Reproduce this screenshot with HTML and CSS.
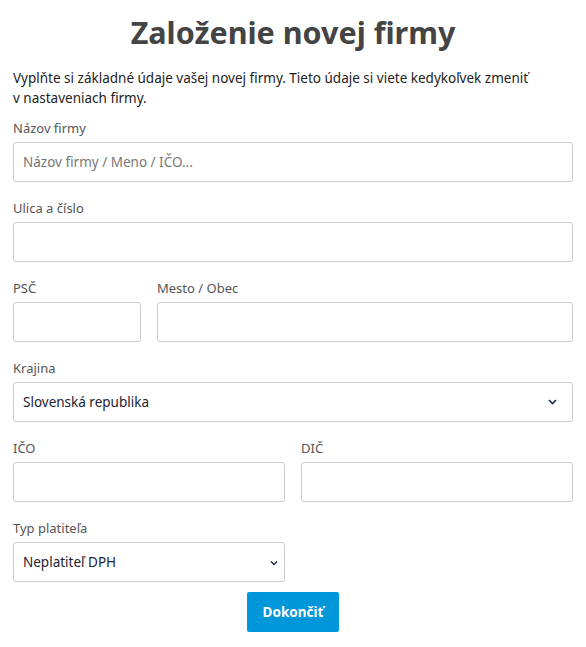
FILE: index.html
```html
<!DOCTYPE html>
<html lang="sk">
<head>
<meta charset="utf-8">
<title>Založenie novej firmy</title>
<link rel="stylesheet" href="styles.css">
</head>
<body>
<main class="page">
  <h1 class="title">Založenie novej firmy</h1>
  <p class="intro">Vyplňte si základné údaje vašej novej firmy. Tieto údaje si viete kedykoľvek zmeniť<br>v nastaveniach firmy.</p>

  <div class="field">
    <label class="label">Názov firmy</label>
    <input class="input" type="text" placeholder="Názov firmy / Meno / IČO...">
  </div>

  <div class="field">
    <label class="label">Ulica a číslo</label>
    <input class="input" type="text">
  </div>

  <div class="row row-zip">
    <div class="field">
      <label class="label">PSČ</label>
      <input class="input" type="text">
    </div>
    <div class="field">
      <label class="label">Mesto / Obec</label>
      <input class="input" type="text">
    </div>
  </div>

  <div class="field">
    <label class="label">Krajina</label>
    <div class="select">
      <span class="select-value">Slovenská republika</span>
      <svg class="chevron" width="9" height="6" viewBox="0 0 9 6"><path d="M1 1 L4.5 4.5 L8 1" fill="none" stroke="#1f2a44" stroke-width="1.6"/></svg>
    </div>
  </div>

  <div class="row row-half">
    <div class="field">
      <label class="label">IČO</label>
      <input class="input" type="text">
    </div>
    <div class="field">
      <label class="label">DIČ</label>
      <input class="input" type="text">
    </div>
  </div>

  <div class="row row-half">
    <div class="field">
      <label class="label">Typ platiteľa</label>
      <div class="select">
        <span class="select-value">Neplatiteľ DPH</span>
        <svg class="chevron chevron-native" width="8" height="6" viewBox="0 0 8 6"><path d="M1 1.5 L4 4.5 L7 1.5" fill="none" stroke="#1f2a44" stroke-width="1.4"/></svg>
      </div>
    </div>
  </div>

  <div class="actions">
    <button class="btn" type="button">Dokončiť</button>
  </div>
</main>
</body>
</html>
```

FILE: styles.css
```css
* { box-sizing: border-box; }

body {
  margin: 0;
  background: #ffffff;
  font-family: "Noto Sans", "Open Sans", sans-serif;
  color: #222;
}

.page {
  width: 586px;
  padding: 0 13px;
}

.title {
  margin: 12px 0 0;
  font-size: 30.5px;
  line-height: 40px;
  font-weight: 700;
  color: #444;
  text-align: center;
}

.intro {
  margin: 16px 0 0;
  font-size: 13.5px;
  line-height: 20px;
  color: #222;
}

.field {
  display: flex;
  flex-direction: column;
  margin-top: 16px;
}

.intro + .field { margin-top: 10px; }

.row .field { margin-top: 0; }

.row {
  display: grid;
  gap: 16px;
  margin-top: 16px;
}

.row-zip { grid-template-columns: 128px 1fr; }
.row-half { grid-template-columns: 1fr 1fr; }

.label {
  font-size: 13px;
  line-height: 20px;
  color: #555;
  margin-bottom: 4px;
}

.input,
.select {
  height: 40px;
  width: 100%;
  border: 1px solid #ccc;
  border-radius: 3px;
  padding: 0 9px;
  font-family: inherit;
  font-size: 13.5px;
  color: #222;
  background: #fff;
}

.input::placeholder { color: #777; }

.select {
  position: relative;
  display: flex;
  align-items: center;
  color: #1c2233;
}

.chevron {
  position: absolute;
  right: 15px;
  top: 16px;
}

.chevron-native {
  right: 6px;
  top: 17px;
}

.actions {
  display: flex;
  justify-content: center;
  margin-top: 10px;
}

.btn {
  width: 92px;
  height: 40px;
  border: 0;
  border-radius: 2px;
  background: #0096da;
  color: #fff;
  font-family: inherit;
  font-weight: 700;
  font-size: 13.5px;
}
```
